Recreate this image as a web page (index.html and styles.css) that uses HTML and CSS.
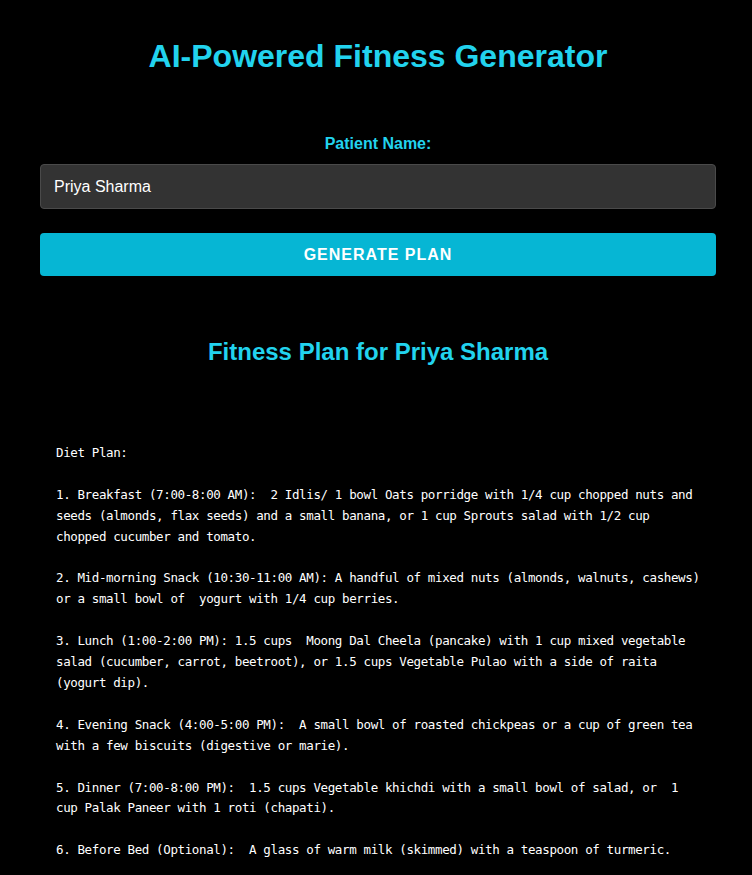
FILE: index.html
```html
<!DOCTYPE html>
<html lang="en">
<head>
<meta charset="utf-8">
<title>AI-Powered Fitness Generator</title>
<link rel="stylesheet" href="styles.css">
</head>
<body>
<div class="container">
  <h1 class="title">AI-Powered Fitness Generator</h1>
  <form class="form">
    <label class="label" for="name">Patient Name:</label>
    <input class="input" id="name" type="text" value="Priya Sharma">
    <button class="btn" type="button">GENERATE PLAN</button>
  </form>
  <h2 class="plan-title">Fitness Plan for Priya Sharma</h2>
  <pre class="plan">Diet Plan:

1. Breakfast (7:00-8:00 AM):  2 Idlis/ 1 bowl Oats porridge with 1/4 cup chopped nuts and seeds (almonds, flax seeds) and a small banana, or 1 cup Sprouts salad with 1/2 cup chopped cucumber and tomato.

2. Mid-morning Snack (10:30-11:00 AM): A handful of mixed nuts (almonds, walnuts, cashews) or a small bowl of  yogurt with 1/4 cup berries.

3. Lunch (1:00-2:00 PM): 1.5 cups  Moong Dal Cheela (pancake) with 1 cup mixed vegetable salad (cucumber, carrot, beetroot), or 1.5 cups Vegetable Pulao with a side of raita (yogurt dip).

4. Evening Snack (4:00-5:00 PM):  A small bowl of roasted chickpeas or a cup of green tea with a few biscuits (digestive or marie).

5. Dinner (7:00-8:00 PM):  1.5 cups Vegetable khichdi with a small bowl of salad, or  1 cup Palak Paneer with 1 roti (chapati).

6. Before Bed (Optional):  A glass of warm milk (skimmed) with a teaspoon of turmeric.</pre>
</div>
</body>
</html>
```
FILE: styles.css
```css
html, body {
  margin: 0;
  padding: 0;
  background: #000;
}
body {
  font-family: "Liberation Sans", Arial, sans-serif;
  color: #fff;
}
.container {
  padding: 0 36px 0 40px;
}
.title {
  margin: 0;
  padding-top: 37px;
  height: 38px;
  line-height: 38px;
  font-size: 32px;
  font-weight: bold;
  text-align: center;
  color: #22d3ee;
}
.form {
  display: flex;
  flex-direction: column;
  margin-top: 60px;
}
.label {
  display: block;
  text-align: center;
  font-size: 16px;
  font-weight: bold;
  color: #22d3ee;
  line-height: 18px;
  margin-bottom: 11px;
}
.input {
  box-sizing: border-box;
  width: 100%;
  height: 45px;
  padding: 0 13px;
  background: #333;
  border: 1px solid #4a4a4a;
  border-radius: 4px;
  color: #fff;
  font-family: "Liberation Sans", Arial, sans-serif;
  font-size: 16px;
  outline: none;
}
.btn {
  margin-top: 24px;
  height: 43px;
  border: none;
  border-radius: 4px;
  background: #06b6d4;
  color: #fff;
  font-family: "Liberation Sans", Arial, sans-serif;
  font-size: 16px;
  font-weight: bold;
  letter-spacing: 1px;
  cursor: pointer;
}
.plan-title {
  margin: 61px 0 0;
  line-height: 30px;
  font-size: 24px;
  font-weight: bold;
  text-align: center;
  color: #22d3ee;
}
.plan {
  margin: 76px 0 0;
  padding: 0 14px 16px 16px;
  font-family: "DejaVu Sans Mono", monospace;
  font-size: 12.5px;
  letter-spacing: -0.375px;
  line-height: 20.9px;
  color: #fff;
  white-space: pre-wrap;
  word-wrap: break-word;
}
```
